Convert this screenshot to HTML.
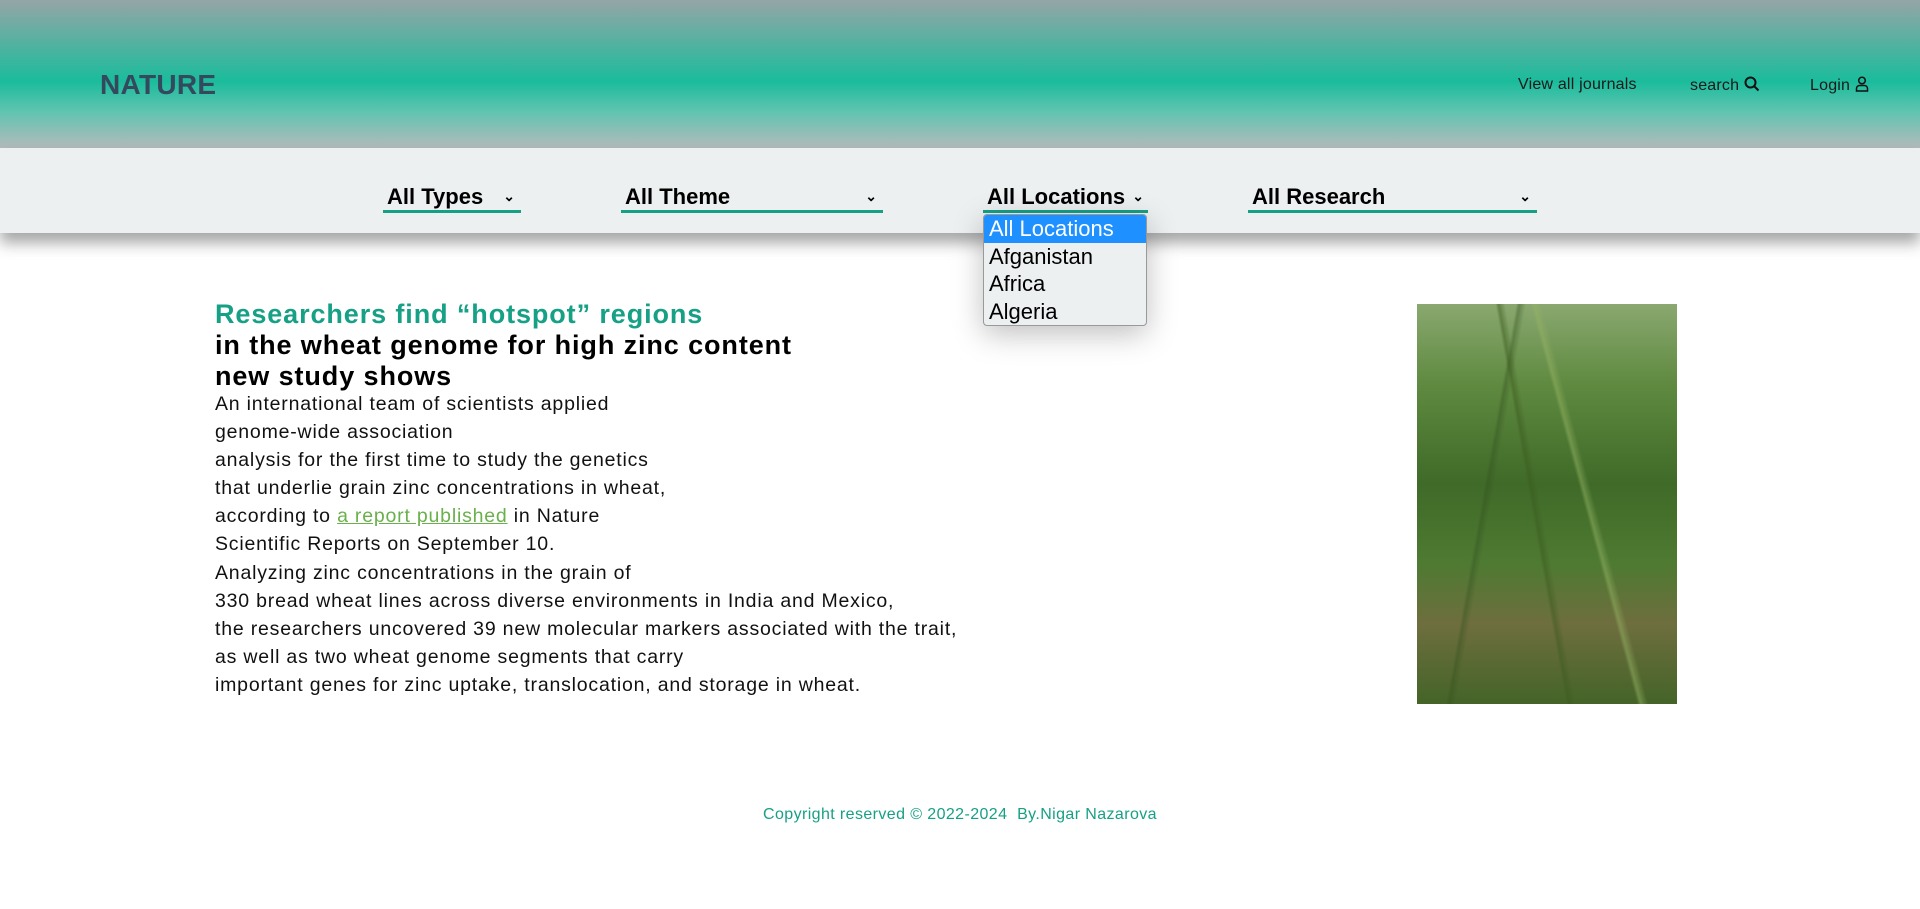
<!DOCTYPE html>
<html><head><meta charset="utf-8"><style>
*{margin:0;padding:0;box-sizing:border-box}
body{width:1920px;height:909px;background:#fff;font-family:"Liberation Sans",sans-serif;position:relative;overflow:hidden}
header{position:absolute;left:0;top:0;width:1920px;height:148px;background:linear-gradient(#95a5a6 0%,#1abc9c 55%,#5fc4b0 75%,#b3bbbb 100%)}
.logo{position:absolute;left:100px;top:69px;font-size:28px;font-weight:bold;color:#34495e;letter-spacing:0.3px}
.nav{position:absolute;top:76px;font-size:16px;color:#1a1a1a;letter-spacing:0.2px}
.bar{position:absolute;left:0;top:148px;width:1920px;height:85px;background:#ecf0f1;box-shadow:0 10px 14px rgba(0,0,0,0.35)}
.sel{position:absolute;top:184px;height:29px;border-bottom:3px solid #16a085;font-size:22px;font-weight:bold;color:#000;padding-left:4px}
.sel .ar{position:absolute;right:6px;top:4px;font-size:14px}
.dd{position:absolute;left:983px;top:214px;width:164px;height:112px;background:#ecf0f1;border:1px solid #999;border-radius:4px;box-shadow:0 8px 30px rgba(0,0,0,0.25);font-size:22px;overflow:hidden}
.dd div{height:27.5px;line-height:27.5px;padding-left:5px;color:#000}
.dd .hl{background:#1e90ff;color:#fff}
.art{position:absolute;left:215px;top:299px}
.h1{font-size:27px;font-weight:bold;line-height:31px;color:#000;letter-spacing:0.9px}
.h1 .g{color:#16a085}
.p{font-size:19.5px;line-height:28.1px;color:#111;margin-top:-2px;letter-spacing:0.8px}
.p a{color:#6ab04c;text-decoration:underline}
.img{position:absolute;left:1417px;top:304px;width:260px;height:400px;background:
linear-gradient(80deg,transparent 45%,rgba(60,90,30,0.5) 46%,transparent 48%),
linear-gradient(100deg,transparent 30%,rgba(50,80,30,0.4) 31%,transparent 33%),
linear-gradient(75deg,transparent 60%,rgba(150,180,100,0.5) 61%,transparent 63%),
linear-gradient(180deg,#8aa870 0%,#5f8a40 20%,#3f6a28 45%,#4e7a32 65%,#6e6e3e 80%,#446428 100%)}
.foot{position:absolute;left:0;width:1920px;top:806px;text-align:center;font-size:16px;color:#16a085;letter-spacing:0.4px}
</style></head><body>
<header>
<div class="logo">NATURE</div>
<div class="nav" style="left:1518px">View all journals</div>
<div class="nav" style="left:1690px">search <svg width="16" height="16" viewBox="0 0 16 16" style="vertical-align:-2px"><circle cx="6.5" cy="6.5" r="5" fill="none" stroke="#111" stroke-width="2"/><path d="M10 10l4.5 4.5" stroke="#111" stroke-width="2"/></svg></div>
<div class="nav" style="left:1810px">Login <svg width="14" height="16" viewBox="0 0 14 16" style="vertical-align:-2px"><circle cx="7" cy="4.5" r="3.3" fill="none" stroke="#111" stroke-width="1.5"/><path d="M1.5 15v-2.5a3 3 0 0 1 3-3h5a3 3 0 0 1 3 3V15z" fill="none" stroke="#111" stroke-width="1.5"/></svg></div>
</header>
<div class="bar"></div>
<div class="sel" style="left:383px;width:138px">All Types<span class="ar">⌄</span></div>
<div class="sel" style="left:621px;width:262px">All Theme<span class="ar">⌄</span></div>
<div class="sel" style="left:983px;width:165px">All Locations<span class="ar" style="right:4px">⌄</span></div>
<div class="sel" style="left:1248px;width:289px">All Research<span class="ar">⌄</span></div>
<div class="dd"><div class="hl">All Locations</div><div>Afganistan</div><div>Africa</div><div>Algeria</div></div>
<div class="art">
<div class="h1"><span class="g">Researchers find “hotspot” regions</span><br>in the wheat genome for high zinc content<br>new study shows</div>
<div class="p">An international team of scientists applied<br>genome-wide association<br>analysis for the first time to study the genetics<br>that underlie grain zinc concentrations in wheat,<br>according to <a>a report published</a> in Nature<br>Scientific Reports on September 10.<br>Analyzing zinc concentrations in the grain of<br>330 bread wheat lines across diverse environments in India and Mexico,<br>the researchers uncovered 39 new molecular markers associated with the trait,<br>as well as two wheat genome segments that carry<br>important genes for zinc uptake, translocation, and storage in wheat.</div>
</div>
<div class="img"></div>
<div class="foot">Copyright reserved © 2022-2024&nbsp; By.Nigar Nazarova</div>
</body></html>
